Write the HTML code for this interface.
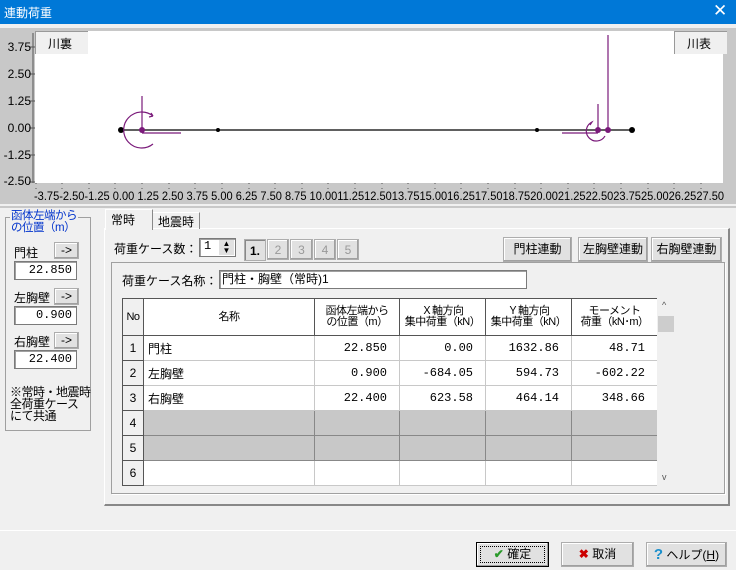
<!DOCTYPE html>
<html><head><meta charset="utf-8"><style>
*{box-sizing:border-box;margin:0;padding:0}
body{width:736px;height:570px;background:#f0f0f0;position:relative;overflow:hidden;font-family:"Liberation Sans","Noto Sans CJK JP",sans-serif;font-size:12px;color:#000}
.a{position:absolute;white-space:nowrap}
.btn{position:absolute;background:#e1e1e1;border:1px solid #adadad;box-shadow:inset -1px -1px #a0a0a0,inset 1px 1px #fff;text-align:center;font-size:12px}
.inp{position:absolute;background:#fff;border:1px solid #7a7a7a;box-shadow:inset 1px 1px #a0a0a0;font-family:"Liberation Mono",monospace;font-size:12px;text-align:right;padding-right:4px}
table{border-collapse:collapse;position:absolute;left:122px;top:298px;background:#fff;table-layout:fixed}
td{border:1px solid #c8c8c8;height:25px;font-size:12px;padding:0 4px;overflow:hidden;white-space:nowrap}
.h td{background:#fff;border:1px solid #555;text-align:center;line-height:11px;font-size:11px;letter-spacing:-0.5px;height:37px;padding:0}
td.no{background:#f0f0f0;border:1px solid #555;text-align:center;padding:0}
td.n{text-align:right;font-family:"Liberation Mono",monospace;padding-right:12px}
tr.g td{background:#c8c8c8;border-color:#888}
tr.g td.no{background:#f0f0f0;border-color:#555}
</style></head><body>
<div class="a" style="left:0;top:0;width:736px;height:24px;background:#0078d7"></div>
<div class="a" style="left:4px;top:4px;color:#fff;font-size:12px">連動荷重</div>
<div class="a" style="left:713px;top:1px;color:#fff;font-size:17px">✕</div>

<div class="a" style="left:0;top:28px;width:736px;height:176px;background:#c8c8c8"></div>
<div class="a" style="left:35px;top:31px;width:688px;height:152px;background:#fff"></div>
<div class="a" style="left:35px;top:31px;width:53px;height:23px;background:#f0f0f0;border-left:1px solid #999;border-top:1px solid #999"></div>
<div class="a" style="left:48px;top:35px;font-size:12px">川裏</div>
<div class="a" style="left:674px;top:31px;width:53px;height:23px;background:#f0f0f0;border-left:1px solid #999;border-top:1px solid #999"></div>
<div class="a" style="left:687px;top:35px;font-size:12px">川表</div>
<svg class="a" style="left:0;top:0" width="736" height="210">
<g stroke="#555" stroke-width="1">
<path d="M33 33V183M29 47H35M29 74H35M29 101H35M29 128H35M29 155H35M29 182H35"/>
<path d="M36 183V190M62 183V190M89 183V190M115 183V190M142 183V190M169 183V190M195 183V190M222 183V190M249 183V190M275 183V190M302 183V190M328 183V190M355 183V190M382 183V190M408 183V190M435 183V190M461 183V190M488 183V190M515 183V190M541 183V190M568 183V190M594 183V190M621 183V190M648 183V190M674 183V190M701 183V190" stroke-dasharray="1 4"/>
</g>
<g font-family="Liberation Sans Narrow,Liberation Sans,sans-serif" font-size="12" fill="#000">
<text x="31" y="51" text-anchor="end">3.75</text><text x="31" y="78" text-anchor="end">2.50</text><text x="31" y="105" text-anchor="end">1.25</text><text x="31" y="132" text-anchor="end">0.00</text><text x="31" y="159" text-anchor="end">-1.25</text><text x="31" y="185" text-anchor="end">-2.50</text>
<text x="34" y="200" textLength="690" lengthAdjust="spacingAndGlyphs">-3.75-2.50-1.25 0.00 1.25 2.50 3.75 5.00 6.25 7.50 8.75 10.0011.2512.5013.7515.0016.2517.5018.7520.0021.2522.5023.7525.0026.2527.50</text>
</g>
<line x1="121" y1="130" x2="632" y2="130" stroke="#000" stroke-width="1.3"/>
<circle cx="121" cy="130" r="3"/><circle cx="218" cy="130" r="2"/><circle cx="537" cy="130" r="2"/><circle cx="632" cy="130" r="3"/>
<g stroke="#7a1a7a" fill="none" stroke-width="1.2">
<path d="M142 96V130M142 133H181"/>
<path d="M153 144A18 18 0 1 1 153 116l-2 -3M153 116l-4 1"/>
<path d="M608 35V130M598 104V130M562 133H598"/>
<path d="M605 136A10 10 0 1 1 592 122l-2 3"/>
</g>
<circle cx="142" cy="130" r="3" fill="#7a1a7a"/><circle cx="598" cy="130" r="3" fill="#7a1a7a"/><circle cx="608" cy="130" r="3" fill="#7a1a7a"/>
<line x1="0" y1="207" x2="736" y2="207" stroke="#a0a0a0"/>
</svg>

<div class="a" style="left:5px;top:217px;width:86px;height:214px;border:1px solid #a0a0a0"></div>
<div class="a" style="left:10px;top:210px;background:#f0f0f0;color:#0033cc;line-height:12px;font-size:11.5px;letter-spacing:-0.5px;padding:0 1px">函体左端から<br>の位置（m）</div>
<div class="a" style="left:14px;top:244px">門柱</div>
<div class="btn" style="left:54px;top:242px;width:25px;height:17px;line-height:14px">-&gt;</div>
<div class="inp" style="left:14px;top:261px;width:63px;height:19px;line-height:17px">22.850</div>
<div class="a" style="left:14px;top:289px">左胸壁</div>
<div class="btn" style="left:54px;top:288px;width:25px;height:17px;line-height:14px">-&gt;</div>
<div class="inp" style="left:14px;top:306px;width:63px;height:19px;line-height:17px">0.900</div>
<div class="a" style="left:14px;top:333px">右胸壁</div>
<div class="btn" style="left:54px;top:332px;width:25px;height:17px;line-height:14px">-&gt;</div>
<div class="inp" style="left:14px;top:350px;width:63px;height:19px;line-height:17px">22.400</div>
<div class="a" style="left:10px;top:386px;line-height:12px;letter-spacing:-0.5px">※常時・地震時<br>全荷重ケース<br>にて共通</div>

<div class="a" style="left:104px;top:228px;width:626px;height:278px;border:1px solid #fff;border-right:2px solid #888;border-bottom:2px solid #888"></div>
<div class="a" style="left:105px;top:209px;width:48px;height:21px;background:#f0f0f0;border:1px solid #fff;border-bottom:none;border-right:1px solid #888"></div>
<div class="a" style="left:111px;top:211px">常時</div>
<div class="a" style="left:153px;top:212px;width:47px;height:17px;border-right:1px solid #888;border-top:1px solid #fff"></div>
<div class="a" style="left:158px;top:213px">地震時</div>

<div class="a" style="left:114px;top:240px;font-size:12px">荷重ケース数：</div>
<div class="inp" style="left:199px;top:238px;width:37px;height:19px;text-align:left;padding-left:4px;line-height:15px">1</div>
<div class="a" style="left:219px;top:240px;width:15px;height:15px;background:#e1e1e1;font-size:8px;line-height:7px;text-align:center">▲<br>▼</div>
<div class="btn" style="left:244px;top:239px;width:22px;height:22px;line-height:22px;font-weight:bold;box-shadow:inset 1px 1px #888">1.</div>
<div class="btn" style="left:267px;top:239px;width:22px;height:21px;line-height:20px;color:#999">2</div>
<div class="btn" style="left:290px;top:239px;width:23px;height:21px;line-height:20px;color:#999">3</div>
<div class="btn" style="left:314px;top:239px;width:22px;height:21px;line-height:20px;color:#999">4</div>
<div class="btn" style="left:337px;top:239px;width:22px;height:21px;line-height:20px;color:#999">5</div>
<div class="btn" style="left:503px;top:237px;width:69px;height:25px;line-height:23px">門柱連動</div>
<div class="btn" style="left:578px;top:237px;width:70px;height:25px;line-height:23px">左胸壁連動</div>
<div class="btn" style="left:651px;top:237px;width:71px;height:25px;line-height:23px">右胸壁連動</div>

<div class="a" style="left:111px;top:262px;width:614px;height:232px;border:1px solid #a0a0a0;box-shadow:1px 1px #fff"></div>
<div class="a" style="left:122px;top:272px;font-size:12px">荷重ケース名称：</div>
<div class="inp" style="left:219px;top:270px;width:308px;height:19px;text-align:left;padding-left:2px;line-height:17px;font-family:'Liberation Sans','Noto Sans CJK JP',sans-serif">門柱・胸壁（常時)1</div>

<table>
<colgroup><col style="width:21px"><col style="width:171px"><col style="width:85px"><col style="width:86px"><col style="width:86px"><col style="width:86px"></colgroup>
<tr class="h"><td class="no">No</td><td>名称</td><td>函体左端から<br>の位置（m）</td><td>Ｘ軸方向<br>集中荷重（kN）</td><td>Ｙ軸方向<br>集中荷重（kN）</td><td>モーメント<br>荷重（kN･m）</td></tr>
<tr><td class="no">1</td><td>門柱</td><td class="n">22.850</td><td class="n">0.00</td><td class="n">1632.86</td><td class="n">48.71</td></tr>
<tr><td class="no">2</td><td>左胸壁</td><td class="n">0.900</td><td class="n">-684.05</td><td class="n">594.73</td><td class="n">-602.22</td></tr>
<tr><td class="no">3</td><td>右胸壁</td><td class="n">22.400</td><td class="n">623.58</td><td class="n">464.14</td><td class="n">348.66</td></tr>
<tr class="g"><td class="no">4</td><td></td><td></td><td></td><td></td><td></td></tr>
<tr class="g"><td class="no">5</td><td></td><td></td><td></td><td></td><td></td></tr>
<tr><td class="no">6</td><td></td><td></td><td></td><td></td><td></td></tr>
</table>
<div class="a" style="left:657px;top:298px;width:18px;height:188px;background:#f0f0f0"></div>
<div class="a" style="left:658px;top:316px;width:16px;height:16px;background:#cdcdcd"></div>
<div class="a" style="left:662px;top:300px;font-size:9px;color:#555">^</div>
<div class="a" style="left:662px;top:472px;font-size:9px;color:#555">v</div>

<div class="a" style="left:0;top:530px;width:736px;height:1px;background:#fff"></div>
<div class="btn" style="left:476px;top:542px;width:73px;height:25px;line-height:23px;border:1px solid #000"><span style="color:#2a9a2a;font-weight:bold">✔</span> 確定</div>
<div class="a" style="left:480px;top:546px;width:65px;height:17px;border:1px dotted #000"></div>
<div class="btn" style="left:561px;top:542px;width:73px;height:25px;line-height:23px"><span style="color:#c00;font-weight:bold">✖</span> 取消</div>
<div class="btn" style="left:646px;top:542px;width:81px;height:25px;line-height:23px"><span style="color:#1a8fcc;font-weight:bold;font-size:15px">?</span> ヘルプ(<u>H</u>)</div>
</body></html>
